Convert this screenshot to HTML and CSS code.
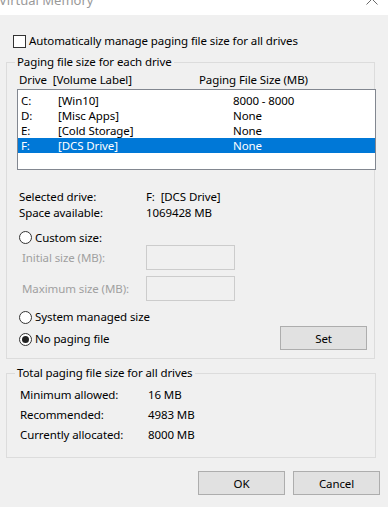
FILE: index.html
```html
<!DOCTYPE html>
<html>
<head>
<meta charset="utf-8">
<link rel="stylesheet" href="styles.css">
</head>
<body>
<div class="titlebar">
  <span class="title">Virtual Memory</span>
  <svg class="close" width="12" height="6" viewBox="0 0 12 6"><path d="M0.5 5.5 L6 0 L11.5 5.5" stroke="#6a6a6a" stroke-width="1" fill="none"/></svg>
</div>
<div class="dialog">
  <div class="check-row"><span class="checkbox"></span><span>Automatically manage paging file size for all drives</span></div>

  <fieldset class="group drives">
    <legend>Paging file size for each drive</legend>
    <div class="list-head"><span class="h1">Drive&nbsp; [Volume Label]</span><span>Paging File Size (MB)</span></div>
    <div class="list">
      <div class="row"><span class="c-drive">C:</span><span class="c-label">[Win10]</span><span>8000 - 8000</span></div>
      <div class="row"><span class="c-drive">D:</span><span class="c-label">[Misc Apps]</span><span>None</span></div>
      <div class="row"><span class="c-drive">E:</span><span class="c-label">[Cold Storage]</span><span>None</span></div>
      <div class="row selected"><span class="c-drive">F:</span><span class="c-label">[DCS Drive]</span><span>None</span></div>
    </div>

    <div class="info">
      <div class="info-row"><span class="k">Selected drive:</span><span>F:&nbsp; [DCS Drive]</span></div>
      <div class="info-row"><span class="k">Space available:</span><span>1069428 MB</span></div>
    </div>

    <div class="radio-row custom"><span class="radio"></span><span>Custom size:</span></div>
    <div class="size-row first"><span class="size-label">Initial size (MB):</span><span class="input"></span></div>
    <div class="size-row"><span class="size-label">Maximum size (MB):</span><span class="input"></span></div>

    <div class="bottom-row">
      <div class="radios">
        <div class="radio-row"><span class="radio"></span><span>System managed size</span></div>
        <div class="radio-row"><span class="radio checked"></span><span>No paging file</span></div>
      </div>
      <button class="btn set">Set</button>
    </div>
  </fieldset>

  <fieldset class="group totals">
    <legend>Total paging file size for all drives</legend>
    <div class="total-row"><span class="tk">Minimum allowed:</span><span>16 MB</span></div>
    <div class="total-row"><span class="tk">Recommended:</span><span>4983 MB</span></div>
    <div class="total-row"><span class="tk">Currently allocated:</span><span>8000 MB</span></div>
  </fieldset>

  <div class="actions">
    <button class="btn">OK</button>
    <button class="btn">Cancel</button>
  </div>
</div>
</body>
</html>
```

FILE: styles.css
```css
* { box-sizing: border-box; }
html, body {
  margin: 0;
  padding: 0;
  background: #f0f0f0;
  width: 388px;
  height: 507px;
  overflow: hidden;
}
body {
  font-family: "Noto Sans", "Open Sans", sans-serif;
  font-size: 11.5px;
  letter-spacing: -0.1px;
  color: #000;
}
.titlebar {
  height: 15px;
  background: #fff;
  display: flex;
  justify-content: space-between;
  align-items: flex-start;
  overflow: hidden;
}
.title {
  color: #999;
  font-size: 13px;
  letter-spacing: 0;
  line-height: 16px;
  margin-top: -8px;
  margin-left: -1px;
}
.close {
  margin-right: 10px;
  margin-top: -1px;
}
.dialog {
  padding: 18px 0 0 0;
}
.check-row {
  display: flex;
  align-items: center;
  height: 16px;
  padding-left: 13px;
  line-height: 16px;
}
.checkbox {
  width: 13px;
  height: 13px;
  border: 1px solid #333;
  background: #fff;
  margin-right: 3px;
  flex: none;
}
.group {
  margin: 0;
  padding: 0;
  border: 1px solid #dcdcdc;
  min-width: 0;
}
.group legend {
  padding: 0 2px;
  margin-left: 8px;
  line-height: 16px;
  height: 16px;
}
.drives {
  margin: 5px 13px 0 6px;
  padding-bottom: 8px;
}
.list-head {
  display: flex;
  height: 16px;
  line-height: 16px;
  margin-top: 2px;
  padding-left: 12px;
}
.list-head .h1 {
  width: 180px;
}
.list {
  margin: 1px -2px 0 10px;
  height: 81px;
  border: 1px solid #828790;
  background: #fff;
  padding-top: 3px;
}
.row {
  display: flex;
  height: 15px;
  line-height: 16px;
}
.row .c-drive {
  width: 40px;
  padding-left: 3px;
}
.row .c-label {
  width: 175px;
}
.row.selected {
  background: #0078d7;
  color: #fff;
}
.info {
  margin-top: 19px;
  padding-left: 12px;
}
.info-row {
  display: flex;
  height: 16px;
  line-height: 16px;
}
.info-row .k {
  width: 127px;
}
.radio-row {
  display: flex;
  align-items: center;
  height: 16px;
  line-height: 16px;
  padding-left: 12px;
}
.radio-row.custom {
  margin-top: 9px;
  height: 15px;
}
.radio {
  width: 13px;
  height: 13px;
  border: 1px solid #333;
  border-radius: 50%;
  background: #fff;
  margin-right: 3px;
  flex: none;
  display: flex;
  align-items: center;
  justify-content: center;
}
.radio.checked::after {
  content: "";
  width: 7px;
  height: 7px;
  border-radius: 50%;
  background: #222;
}
.size-row {
  display: flex;
  align-items: center;
  height: 25px;
  padding-left: 15px;
  margin-top: 6px;
}
.size-row.first {
  margin-top: 0;
}
.size-label {
  width: 124px;
  color: #a0a0a0;
}
.input {
  width: 89px;
  height: 25px;
  border: 1px solid #cccccc;
  background: #f0f0f0;
}
.bottom-row {
  display: flex;
  justify-content: space-between;
  align-items: flex-end;
  margin-top: 8px;
  padding-right: 7px;
}
.radios {
  display: flex;
  flex-direction: column;
  gap: 6px;
  margin-bottom: 3px;
}
.btn {
  font-family: inherit;
  font-size: 11.5px;
  letter-spacing: -0.1px;
  color: #000;
  width: 87px;
  height: 24px;
  border: 1px solid #adadad;
  background: #e1e1e1;
  padding: 0;
  margin: 0;
}
.totals {
  margin: 6px 12px 0 6px;
  padding: 4px 0 12px 0;
}
.total-row {
  display: flex;
  height: 20px;
  line-height: 20px;
  padding-left: 13px;
}
.total-row .tk {
  width: 128px;
}
.actions {
  display: flex;
  justify-content: flex-end;
  gap: 8px;
  padding-right: 8px;
  margin-top: 13px;
}
```
